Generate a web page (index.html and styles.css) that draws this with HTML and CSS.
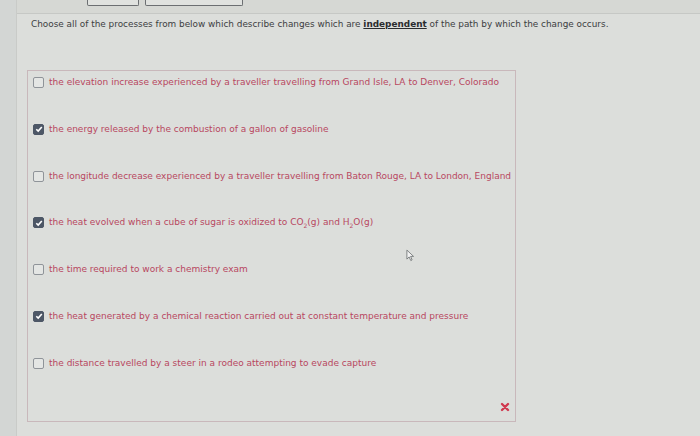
FILE: index.html
```html
<!DOCTYPE html>
<html>
<head>
<meta charset="utf-8">
<link rel="stylesheet" href="styles.css">
</head>
<body>
<div class="page">
  <div class="side"></div>
  <div class="main">
    <div class="topbar">
      <div class="btn btn-a"></div>
      <div class="btn btn-b"></div>
    </div>
    <div class="content">
      <p class="question">Choose all of the processes from below which describe changes which are <b class="em">independent</b> of the path by which the change occurs.</p>
      <div class="box">
        <div class="opt"><span class="cb"></span><span>the elevation increase experienced by a traveller travelling from Grand Isle, LA to Denver, Colorado</span></div>
        <div class="opt"><span class="cb on"><svg viewBox="0 0 10 10" width="10" height="10"><path d="M2.3 5.2 L4.2 7.1 L7.8 2.9" fill="none" stroke="#fff" stroke-width="1.6"/></svg></span><span>the energy released by the combustion of a gallon of gasoline</span></div>
        <div class="opt"><span class="cb"></span><span>the longitude decrease experienced by a traveller travelling from Baton Rouge, LA to London, England</span></div>
        <div class="opt"><span class="cb on"><svg viewBox="0 0 10 10" width="10" height="10"><path d="M2.3 5.2 L4.2 7.1 L7.8 2.9" fill="none" stroke="#fff" stroke-width="1.6"/></svg></span><span>the heat evolved when a cube of sugar is oxidized to CO<sub>2</sub>(g) and H<sub>2</sub>O(g)</span></div>
        <div class="opt"><span class="cb"></span><span>the time required to work a chemistry exam</span></div>
        <div class="opt"><span class="cb on"><svg viewBox="0 0 10 10" width="10" height="10"><path d="M2.3 5.2 L4.2 7.1 L7.8 2.9" fill="none" stroke="#fff" stroke-width="1.6"/></svg></span><span>the heat generated by a chemical reaction carried out at constant temperature and pressure</span></div>
        <div class="opt"><span class="cb"></span><span>the distance travelled by a steer in a rodeo attempting to evade capture</span></div>
        <div class="mark"><svg viewBox="0 0 10 10" width="10" height="10"><path d="M2 2 L8 8 M8 2 L2 8" stroke="#d0394f" stroke-width="2.4" stroke-linecap="round"/></svg></div>
        <svg class="cursor" viewBox="0 0 10 14" width="9" height="13"><path d="M1 1 L1 11 L3.5 8.6 L5.3 12.6 L6.8 11.9 L5.1 8 L8.4 8 Z" fill="#f2f2f2" stroke="#6b6e70" stroke-width="0.9"/></svg>
      </div>
    </div>
  </div>
</div>
</body>
</html>
```
FILE: styles.css
```css
* { box-sizing: border-box; }
html, body { margin: 0; padding: 0; }
body {
  width: 700px;
  height: 436px;
  overflow: hidden;
  background: #d9dbd8;
  font-family: "DejaVu Sans", Verdana, sans-serif;
}
.page {
  display: flex;
  height: 436px;
}
.side {
  width: 17px;
  background: #d3d6d4;
  border-right: 1px solid #c9cbc8;
}
.main {
  flex: 1;
  display: flex;
  flex-direction: column;
}
.topbar {
  height: 14px;
  border-bottom: 1px solid #c6c8c5;
  background: #d6d8d4;
  display: flex;
  gap: 6px;
  padding-left: 70px;
}
.btn {
  height: 6px;
  border: 1px solid #6c6f72;
  border-top: none;
  border-radius: 0 0 2px 2px;
  background: #e0e2df;
}
.btn-a { width: 52px; }
.btn-b { width: 98px; }
.content {
  flex: 1;
  background: #dcdedb;
  padding: 4px 0 0 10px;
}
.question {
  margin: 0;
  font-size: 8.9px;
  color: #3b3d3f;
  line-height: 13px;
  padding-left: 4px;
}
.em {
  font-weight: bold;
  text-decoration: underline;
  color: #2a2c2e;
}
.box {
  position: relative;
  margin-top: 39px;
  width: 489px;
  height: 352px;
  border: 1px solid #c9b8bb;
  padding: 5px 0 0 5px;
  display: flex;
  flex-direction: column;
}
.opt {
  height: 46.8px;
  display: flex;
  align-items: flex-start;
  gap: 5px;
  font-size: 9px;
  line-height: 12px;
  color: #b8475f;
}
.opt sub {
  font-size: 6px;
  line-height: 0;
}
.cb {
  flex: none;
  width: 11px;
  height: 11px;
  margin-top: 1px;
  border: 1px solid #8f9499;
  border-radius: 2px;
  background: #e4e6e4;
  display: flex;
}
.cb.on {
  background: #4d5766;
  border-color: #4d5766;
}
.cb svg { margin: -0.5px; }
.mark {
  position: absolute;
  right: 5px;
  bottom: 9px;
  display: flex;
}
.cursor {
  position: absolute;
  left: 378px;
  top: 178px;
}
```
